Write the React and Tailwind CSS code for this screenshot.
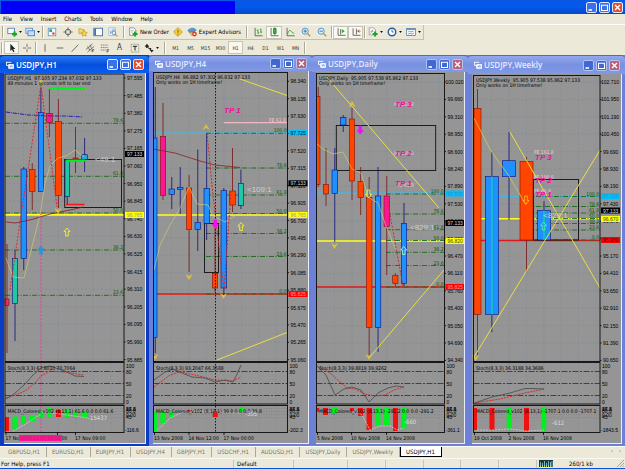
import React, { useState } from 'react';
import clsx from 'clsx';

const BLUE = '#1e90ff';
const ORANGE = '#ff4500';
const PINK = '#ff1493';
const TEAL = '#20c8a8';
const NAVY = '#10107a';
const MAROON = '#7a1414';
const LIME = '#00f020';
const RED = '#f01010';

// candle: [left, right, bodyTop, bodyBottom, wickTop, wickBottom, color]
const charts = [
  {
    title: 'USDJPY,H1',
    active: true,
    view: [4, 73, 141, 370],
    frame: [5, 124, 74],
    titleHeight: 'h-[18px]',
    header: ['USDJPY,H1  97.105 97.234 97.032 97.133', '49 minutes 1 seconds left to bar end'],
    prices: ['97.595', '97.485', '97.380', '97.275', '97.165', '97.060', '96.950', '96.845', '96.740', '96.630', '96.525', '96.415', '96.310', '96.205', '96.095', '95.990', '95.885'],
    priceStart: 78,
    priceStep: 17.6,
    gridX: [23.5, 41, 58.5, 76, 93, 111],
    tags: [[154, '97.133', '#000', '#ddd'], [215, '96.765', '#ff0', '#998']],
    levels: [[214.7, '#ffff20', 2]],
    fibs: [[123.3, '78.6'], [176.3, '61.8'], [213, '50.0'], [250, '38.2'], [295.3, '23.6']],
    fibStart: 5,
    candles: [
      [5, 9, 299, 305.5, 244, 353, '#e8305a'],
      [12.5, 17.5, 258.5, 303.5, 250, 341, TEAL],
      [21, 26.5, 169, 258.5, 167, 270, BLUE],
      [29.5, 35, 169.5, 191.5, 163, 210, ORANGE],
      [38.3, 43.5, 112.5, 191.5, 88, 191, BLUE],
      [46.5, 52.3, 113.5, 122.5, 89, 137, PINK],
      [55.5, 61.3, 121.5, 195.5, 99, 208, ORANGE],
      [65, 69.5, 160, 196.7, 160, 204, TEAL],
      [73, 78, 158, 159, 127, 173, ORANGE],
      [81.7, 87.5, 154.7, 159.3, 138, 172, '#20a8d8'],
    ],
    box: [64.7, 159.5, 56.8, 48],
    segments: [[49.5, 88.5, 85, 88.5, LIME, 2], [66, 160.5, 85, 160.5, LIME, 2], [66, 204.5, 84.5, 204.5, '#f01818', 1.5]],
    lines: [
      ['6,258 13,277 24,278 40,215 45,183 50,166 58,158 66,156 75,150 84,157', '#d8d070', 0.6],
      ['6,222 15,223 30,220 50,214 70,210 83,207', '#8a1c1c', 0.8],
      ['6,112 28,115 55,116 65,116 83,117', '#2020b0', 1, '4 1 1 1'],
      ['10,290 20,222 41,85 57,207', '#e02828', 1, '2 1.5'],
      ['41,213 41,432', '#f0409a', 1, '2 1.5'],
    ],
    heads: [[41, 82, 'up'], [58, 211, 'down']],
    arrows: [[67, 232, 'up', '#ffff20', 'none'], [41, 250, 'up', '#3090e0', '#3090e0']],
    notes: [[95, 162, '<49:1']],
    tps: [],
    stoch: 'Stoch(8,3,3) 67.8010 70.7064',
    main: '6,399 14,394 24,385 33,375 41,368 50,366 65,371 75,376 84,376.5',
    signal: '6,398 15,395 25,391 35,383 41,376 50,371 65,372 84,375',
    macd: 'MACD_Colored_v102 (8,13,1) 61.6 0.0 0.0 61.6',
    bars: [[5, 4, 417, 431, RED], [12.5, 5, 416.5, 430, LIME], [21, 5, 416, 424, LIME], [30, 5, 416, 421, LIME], [38.5, 5, 411, 417, LIME], [47, 5, 407.5, 417, LIME], [56, 5, 410, 417, RED], [64.5, 5, 410, 417, LIME], [73, 5, 411, 417, LIME], [82, 5.5, 412, 417, LIME]],
    macdCurve: '13,431 24,425 36,417 45,412 60,414 88,418',
    macdNote: [88, 420, '-15437'],
    low: '-116.6',
    dates: [[5.5, '17 Nov 2008'], [57, '5:00'], [75, '17 Nov 09:00']],
    marker: [19, 43, '2008.11.17 05:00'],
  },
  {
    title: 'USDJPY,H4',
    view: [153, 71, 155, 372],
    frame: [153.5, 287.5, 72.5],
    titleHeight: 'h-4',
    header: ['USDJPY,H4  96.882 97.302 96.832 97.133', 'Only works on 1H timeframe!'],
    prices: ['98.340', '98.135', '97.930', '97.725', '97.520', '97.315', '97.110', '96.905', '96.700', '96.495', '96.290', '96.085', '95.880', '95.675', '95.470', '95.265', '95.060'],
    priceStart: 81.3,
    priceStep: 17.4,
    gridX: [171.5, 189, 206.5, 224, 241.5, 259, 276],
    tags: [[133, '97.725', '#00bfff', '#012'], [183.3, '97.133', '#000', '#ddd'], [215, '96.765', '#ff0', '#998'], [294, '95.825', '#f00', '#f99']],
    levels: [[133.3, '#30c0f0', 1.5], [215, '#ffff20', 1.5], [294, '#e01818', 1.5]],
    fibs: [[133.3, '100.0'], [168, '78.6'], [195, '61.8'], [213.5, '50.0'], [233.5, '38.2'], [256.5, '23.6'], [294, '0.0']],
    fibStart: 206,
    candles: [
      [153.5, 157, 138, 337.5, 87, 353, BLUE],
      [160.3, 165.7, 136.5, 195.5, 103, 200, PINK],
      [169, 174.5, 189, 194.3, 177, 209, BLUE],
      [177.5, 183, 187.5, 189.5, 167, 214, BLUE],
      [186.5, 191.7, 188, 229.5, 175, 272, ORANGE],
      [195, 200.5, 222.5, 229.5, 149.5, 251, BLUE],
      [204, 209.3, 188.3, 223.5, 133, 240, BLUE],
      [212.3, 217.7, 273.3, 288, 223, 292, ORANGE],
      [221, 226.7, 190.7, 288, 188, 295, BLUE],
      [229.7, 235.3, 191, 205, 148, 212, ORANGE],
      [238.3, 243.5, 183.3, 205.7, 169.7, 209, TEAL],
    ],
    box: [204.5, 223.5, 14, 49],
    segments: [[223.7, 122.7, 287, 122.7, '#f0b8c4', 1.3], [240, 79, 287, 95.5, '#e8e040', 1], [217, 360, 287, 332.5, '#e8e040', 1]],
    lines: [
      ['153,149 175,153 200,161 215,165 240,167.5', '#8a2020', 0.8],
      ['154,270 160,245 170,225 180,208 189,187 197,204 208,205 213,216 225,222 238,214', '#d8d070', 0.6],
      ['207,133 213,195 224,290 231,192', '#d02828', 1, '2 1.5'],
      ['215.5,73 215.5,432', '#181818', 1, '1.5 1.5'],
    ],
    heads: [[206, 127, 'up'], [189, 277, 'down'], [223.5, 296, 'down'], [155, 357, 'down']],
    arrows: [[215.3, 224, 'down', '#f010f0', '#f010f0'], [241, 226.5, 'up', '#ffff20', 'none']],
    notes: [[247, 192, '<109:1']],
    tps: [[224, 113, 'TP 1']],
    fes: [[269, 121.5, 'FE 61.8']],
    stoch: 'Stoch(8,3,3) 93.2047 66.3588',
    main: '154,380 165,372 173,369 182,373 192,377 205,378 215,382 225,380 233,382 237,374 241,365',
    signal: '154,387 170,375 180,372 195,375 215,380 233,381 241,377',
    macd: 'MACD_Colored_v102 (8,13,1) 39.8 0.0 0.0 39.8',
    bars: [[154, 3, 411, 431, LIME], [160.3, 5.3, 411, 423, LIME], [169, 5, 411, 417, LIME], [187, 5, 410, 412, RED], [212.7, 5, 411, 417, RED], [239, 5, 407, 412, LIME]],
    macdCurve: '157,430 163,425 170,418 185,411 241,413',
    macdNote: [245, 416, '-305'],
    low: '-202.3',
    dates: [[154, '13 Nov 2008'], [188.5, '14 Nov 12:00'], [223.5, '17 Nov 00:00']],
  },
  {
    title: 'USDJPY,Daily',
    view: [316, 72, 148, 371],
    frame: [316.5, 444.5, 73.5],
    titleHeight: 'h-[17px]',
    header: ['USDJPY,Daily  95.905 97.538 95.862 97.133', 'Only works on 1H timeframe!'],
    prices: ['100.020', '99.660', '99.310', '98.950', '98.600', '98.240', '97.890', '97.530', '97.180', '96.820', '96.470', '96.110', '95.760', '95.400', '95.050', '94.690', '94.340'],
    priceStart: 82,
    priceStep: 17.4,
    gridX: [334.5, 352, 369.5, 387, 404, 421.5, 439],
    tags: [[193.5, '97.725', '#00bfff', '#3090c0'], [223, '97.133', '#000', '#ddd'], [241, '96.820', '#ff0', '#443'], [287, '95.825', '#f00', '#f99']],
    levels: [[193.3, '#30c0f0', 1.5], [241, '#ffff20', 1.5], [287, '#e01818', 1.5]],
    fibs: [[194, '100.0'], [214, '78.6'], [229.7, '61.8'], [240.5, '50.0'], [252.3, '38.2'], [265.5, '23.6'], [287, '0.0']],
    fibStart: 386,
    candles: [
      [316.5, 320, 96.5, 184.5, 87, 187, ORANGE],
      [323.3, 328.7, 184.5, 194, 148, 206, ORANGE],
      [332, 337.5, 170, 193.5, 148, 242, BLUE],
      [340.5, 346, 117.5, 125, 115, 132, BLUE],
      [349.3, 354.7, 119, 181, 108, 200, ORANGE],
      [358, 363.3, 181.3, 197.5, 167, 215, ORANGE],
      [366.3, 372, 197.5, 327.5, 177, 355, ORANGE],
      [375.3, 380.8, 196, 327.5, 167, 352, BLUE],
      [384, 389.5, 196, 226.5, 176, 275, PINK],
      [392.7, 398, 275.3, 283.5, 273, 286, ORANGE],
      [401.3, 406.7, 223.3, 283.5, 203, 286, BLUE],
    ],
    box: [336.3, 125.5, 99.4, 45],
    segments: [[326, 76, 439, 208, '#e8e040', 1], [369, 358, 444, 270, '#e8e040', 1]],
    lines: [
      ['316,143 323,149 333,154 343,152 352,169 361,173 368,197 378,203 386,226 396,250', '#d8d070', 0.6],
      ['387,198 403,286', '#d02828', 1, '2 1.5'],
    ],
    heads: [[352, 104, 'up'], [334.5, 246, 'down'], [369, 357, 'down']],
    arrows: [[360.3, 130, 'down', '#f010f0', '#f010f0'], [368.5, 194, 'down', '#ffff20', 'none'], [403.7, 250.5, 'up', '#b0ffe0', 'none']],
    notes: [[410, 230, '<829:1']],
    tps: [[395, 106.5, 'TP 3'], [395, 155.5, 'TP 2'], [395, 186, 'TP 1']],
    fes: [[394, 106, 'FE 161.8'], [394, 155, 'FE 100.0'], [397, 187, 'FE 61.8']],
    stoch: 'Stoch(8,3,3) 39.8819 39.9262',
    main: '317,366 326,375 335,395 344,389 352,387 361,390 369,402 378,393 388,388 396,386 404,387',
    signal: '320,367 330,373 340,382 347,388 355,389 365,394 375,396 385,395 394,390 404,387',
    macd: 'MACD_Colored_v102 (8,13,1) -291.2 0.0 0.0 -291.2',
    bars: [[317, 2, 408, 412, RED], [323, 5, 408, 415, RED], [332, 5.5, 408, 414, LIME], [350, 4, 408, 411, RED], [358, 5, 408, 416, RED], [366.5, 5.5, 408, 430, RED], [375.5, 5, 408, 425, LIME], [384, 5, 408, 425, LIME], [393, 5, 408, 431, RED], [401.5, 5, 408, 428.5, LIME]],
    macdCurve: '355,411 362,415 370,430 380,426 390,426 397,430 404,428',
    macdNote: [404, 424, '-660'],
    low: '-361.1',
    dates: [[317, '5 Nov 2008'], [351, '10 Nov 2008'], [386, '14 Nov 2008']],
  },
  {
    title: 'USDJPY,Weekly',
    view: [472, 74, 149, 369],
    frame: [473.5, 600, 75.5],
    titleHeight: 'h-[19px]',
    header: ['USDJPY,Weekly  95.905 97.538 95.862 97.133', 'Only works on 1H timeframe!'],
    prices: ['102.710', '101.950', '101.190', '100.450', '99.690', '98.930', '98.190', '97.430', '96.670', '95.930', '95.170', '94.410', '93.650', '92.910', '92.150', '91.390', '90.650'],
    priceStart: 82,
    priceStep: 17.4,
    gridX: [491.5, 509, 526.5, 544, 561, 578.5, 596],
    tags: [[196, '97.725', '#00bfff', '#3090c0'], [210.5, '97.133', '#000', '#ddd'], [219, '96.670', '#ff0', '#443'], [240, '95.930', '#f00', '#600']],
    levels: [[196.3, '#30c0f0', 1], [218.7, '#ffff20', 1.5], [240.5, '#e01818', 1.5]],
    fibs: [[196.5, '100.0'], [206.5, '78.6'], [213, '61.8'], [218.5, '50.0'], [223.5, '38.2'], [230, '23.6'], [240, '0.0']],
    fibStart: 527,
    candles: [
      [474, 481, 108.5, 314.5, 89, 355, ORANGE],
      [485.3, 498.5, 176.5, 314.5, 152, 332, BLUE, true],
      [502.5, 515.5, 160.7, 176.7, 132, 220, BLUE],
      [520, 533, 161.5, 240, 157, 272, ORANGE],
      [537.5, 550.5, 210.5, 240, 201, 240, BLUE, true],
    ],
    box: [533.5, 179.5, 45, 60.5],
    segments: [[510, 132, 600, 288, '#e8e040', 1], [600, 150, 474, 357, '#e8e040', 1]],
    lines: [['474,118 491,151 509,176 526,205', '#d8c850', 0.8]],
    heads: [[475.5, 358, 'down']],
    arrows: [[526, 200, 'down', '#ffc020', 'none'], [543.5, 226, 'up', '#60ff60', 'none']],
    notes: [[543, 218, '<829:1']],
    tps: [[535, 160, 'TP 3'], [535, 183, 'TP 2'], [535, 196.5, 'TP 1']],
    fes: [[534, 154, 'FE 161.8'], [534, 178.5, 'FE 100.0'], [534, 192.5, 'FE 61.8']],
    stoch: 'Stoch(8,3,3) 36.3188 34.3686',
    main: '474.5,403 492,397 510,393 525,388.5 532,388.5 544,389',
    signal: '474.5,403 500,399 525,393 544,389',
    macd: 'MACD_Colored_v102 (8,13,1) -1707.1 0.0 0.0 -1707.1',
    bars: [[474, 3, 408, 430, RED], [489.5, 5, 408, 430, RED], [506.7, 5, 408, 430, LIME], [524, 5, 408, 431, RED], [541.3, 5, 408, 430.5, LIME]],
    macdCurve: '477,430 492,430 510,429 527,431 544,430',
    macdNote: [552, 425, '-612'],
    low: '-1843.5',
    dates: [[474, '19 Oct 2008'], [508.5, '2 Nov 2008'], [543, '16 Nov 2008']],
  },
];

const Arrow = ({ x, y, dir, stroke, fill }) => (
  <path
    transform={`translate(${x} ${y})${dir === 'down' ? ' rotate(180)' : ''}`}
    d="M0 -4 L3 -0.5 H1.3 V4 H-1.3 V-0.5 H-3 Z"
    stroke={stroke}
    fill={fill}
    strokeWidth="0.8"
  />
);

const Head = ({ x, y, dir }) => (
  <path
    transform={`translate(${x} ${y})${dir === 'down' ? ' rotate(180)' : ''}`}
    d="M-3 2.5 L0 -2.5 L3 2.5 L0 0.5 Z"
    fill="#e8c020"
    stroke="#f0d840"
    strokeWidth="0.3"
  />
);

const Chart = ({ c }) => {
  const [left, right, top] = c.frame;
  return (
    <svg viewBox={c.view.join(' ')} className="block h-auto w-full text-[5px]" role="img" aria-label={`${c.title} chart`}>
      <rect x={c.view[0]} y={c.view[1]} width={c.view[2]} height={c.view[3]} fill="#959595" />

      {/* grid */}
      <g stroke="#7f8a98" strokeWidth="0.6" strokeDasharray="2 2">
        {c.gridX.map((x) => (
          <path key={x} d={`M${x} ${top}V361M${x} 363V404M${x} 406V432`} />
        ))}
        {c.prices.map((p, i) => (
          <path key={p} d={`M${left} ${c.priceStart + i * c.priceStep}H${right}`} />
        ))}
      </g>

      {c.levels.map(([y, color, w]) => (
        <path key={y} d={`M${left} ${y}H${right}`} stroke={color} strokeWidth={w} />
      ))}
      {c.fibs.map(([y, label]) => (
        <g key={label}>
          <path d={`M${c.fibStart} ${y}H${right}`} stroke="#1a6a1a" strokeWidth="0.9" strokeDasharray="5 1.5 1 1.5" />
          <text x={right - 1} y={y - 1} textAnchor="end" fill="#005c00">{label}</text>
        </g>
      ))}
      <rect x={c.box[0]} y={c.box[1]} width={c.box[2]} height={c.box[3]} fill="none" stroke="#111" strokeWidth="0.9" />

      {/* candles */}
      {c.candles.map(([x1, x2, y1, y2, w1, w2, color, core]) => {
        const dark = color === BLUE || color === TEAL || color === '#20a8d8' ? NAVY : MAROON;
        return (
          <g key={x1}>
            <path d={`M${(x1 + x2) / 2} ${w1}V${w2}`} stroke={dark} strokeWidth="0.8" />
            <rect x={x1} y={y1} width={x2 - x1} height={y2 - y1} fill={color} stroke={dark} strokeWidth="0.6" />
            {core && <path d={`M${(x1 + x2) / 2} ${y1}V${y2}`} stroke="#10d8a0" strokeWidth="1.2" />}
          </g>
        );
      })}
      {c.segments.map(([x1, y1, x2, y2, color, w]) => (
        <path key={`${x1}-${y1}`} d={`M${x1} ${y1}L${x2} ${y2}`} stroke={color} strokeWidth={w} />
      ))}
      {c.lines.map(([points, color, w, dash]) => (
        <polyline key={points} points={points} fill="none" stroke={color} strokeWidth={w} strokeDasharray={dash} />
      ))}
      {c.heads.map(([x, y, dir]) => <Head key={`${x}-${y}`} x={x} y={y} dir={dir} />)}
      {c.arrows.map(([x, y, dir, stroke, fill]) => (
        <Arrow key={`${x}-${y}`} x={x} y={y} dir={dir} stroke={stroke} fill={fill} />
      ))}

      {(c.fes || []).map(([x, y, label]) => <text key={label} x={x} y={y} fill="#f8c8d4">{label}</text>)}
      {c.tps.map(([x, y, label]) => (
        <text key={label} x={x} y={y} fill="#f0109a" className="font-['Liberation_Sans',sans-serif] text-[8px] font-bold italic">{label}</text>
      ))}
      {c.notes.map(([x, y, label]) => (
        <text key={label} x={x} y={y} fill="#cfcfcf" className="font-['Liberation_Sans',sans-serif] text-[8px]">{label}</text>
      ))}
      <text x={left + 2.5} y={top + 6} className="whitespace-pre">{c.header[0]}</text>
      <text x={left + 2.5} y={top + 11}>{c.header[1]}</text>

      {/* stochastic */}
      <g stroke="#2828b8" strokeWidth="0.9" strokeDasharray="6 1.5 2 1.5">
        <path d={`M${left} 371.5H${right}M${left} 383.5H${right}M${left} 395.5H${right}`} />
      </g>
      <polyline points={c.signal} fill="none" stroke="#d82020" strokeWidth="0.9" strokeDasharray="2 1" />
      <polyline points={c.main} fill="none" stroke="#505050" strokeWidth="0.9" />
      <text x={left + 2.5} y="369.5">{c.stoch}</text>

      {/* macd */}
      <path d={`M${left} 408.5H${right}M${left} 411.5H${right}M${left} 414.5H${right}M${left} 417.5H${right}`} stroke="#7c7c7c" strokeWidth="0.6" strokeDasharray="1 1.5" />
      {c.bars.map(([x, w, y1, y2, color]) => <rect key={x} x={x} y={y1} width={w} height={y2 - y1} fill={color} />)}
      <polyline points={c.macdCurve} fill="none" stroke="#d8d8d8" strokeWidth="0.7" strokeDasharray="2 1" />
      <text x={left + 2.5} y="413">{c.macd}</text>
      <text x={c.macdNote[0]} y={c.macdNote[1]} fill="#dcdcdc" className="text-[6px]">{c.macdNote[2]}</text>

      {/* panel borders */}
      <g stroke="#181818" fill="none">
        <rect x={left} y={top} width={right - left} height={361.5 - top} />
        <rect x={left} y="362.5" width={right - left} height="41.5" />
        <rect x={left} y="405.5" width={right - left} height="27" />
      </g>

      {/* scales */}
      <g className="font-['Liberation_Sans',sans-serif]">
        {c.prices.map((p, i) => (
          <React.Fragment key={p}>
            <path d={`M${right} ${c.priceStart + i * c.priceStep}h1.5`} stroke="#000" strokeWidth="0.8" />
            <text x={right + (p.length > 6 ? 1 : 3)} y={c.priceStart + i * c.priceStep + 2}>{p}</text>
          </React.Fragment>
        ))}
        {[['100', 368], ['80', 373.5], ['50', 385.5], ['20', 397.5], ['0', 403.5]].map(([t, y]) => (
          <text key={t} x={right + 2} y={y}>{t}</text>
        ))}
        {[['86.3', 411], ['00.0', 412.5], ['17.6', 410.5], ['0.00', 417], ['45', 419]].map(([t, y]) => (
          <text key={t} x={right + 2} y={y}>{t}</text>
        ))}
        <text x={right + 1} y="431.5">{c.low}</text>
      </g>
      {c.dates.map(([x, d]) => (
        <React.Fragment key={d}>
          <path d={`M${x + 0.5} 432v3`} stroke="#000" strokeWidth="0.8" />
          <text x={x} y="439.5">{d}</text>
        </React.Fragment>
      ))}
      {c.tags.map(([y, label, bg, color]) => (
        <g key={label}>
          <rect x={right + 1} y={y - 3} width="19" height="6" fill={bg} />
          <text x={right + 3} y={y + 2} fill={color} className="font-['Liberation_Sans',sans-serif]">{label}</text>
        </g>
      ))}
      {c.marker && (
        <g>
          <rect x={c.marker[0]} y="435" width={c.marker[1]} height="6" fill="#ff1493" />
          <text x={c.marker[0] + 1} y="439.5" fill="#a83070">{c.marker[2]}</text>
        </g>
      )}
    </svg>
  );
};

const WindowButtons = ({ dim, name }) => (
  <div className="flex gap-[2px]">
    {['Minimize', 'Maximize', 'Close'].map((kind) => (
      <button
        key={kind}
        aria-label={`${kind} ${name}`}
        className={clsx(
          'size-[11px] rounded-[2px] border',
          dim ? 'border-[#b4c4f0]' : 'border-[#dfe8ff]',
          kind === 'Close' ? (dim ? 'bg-[#b8607c]' : 'bg-[#e0502c]') : dim ? 'bg-[#3f68d4]' : 'bg-[#3a70ea]'
        )}
      >
        <svg viewBox="0 0 9 9" className="block size-full" fill="none" stroke="#fff">
          {kind === 'Minimize' && <path d="M1.5 7H5" strokeWidth="1.6" />}
          {kind === 'Maximize' && <path d="M1.5 2.2H7.5M1.5 1.8V7.5H7.5V1.8" strokeWidth="1.1" />}
          {kind === 'Close' && <path d="M2 2L7 7M7 2L2 7" strokeWidth="1.4" />}
        </svg>
      </button>
    ))}
  </div>
);

const ChartWindow = ({ c }) => (
  <section className={clsx('flex flex-col pr-[3px] pb-[2px] pl-1', c.active ? 'bg-[#0c3cc4]' : 'bg-[#6c80d6]')}>
    <header
      className={clsx(
        '-mr-[3px] -ml-1 flex items-center gap-[2px] rounded-t-[4px] border-t pl-[6px] pr-[5px]',
        c.titleHeight,
        c.active ? 'border-[#0838b0] bg-linear-to-b from-[#2a78f4] via-[#0650dc] to-[#0a5cf0]' : 'border-[#5468b8] bg-linear-to-b from-[#92a8ee] via-[#7890e0] to-[#809ae6]'
      )}
    >
      <svg viewBox="0 0 9 9" className="size-[8px] shrink-0" fill="none" stroke="#fff">
        <path d="M0.5 1.5H6M0.5 1V5H3" />
        <path d="M3 4H8.5V8.3H3Z" fill="#d8e4ff" />
        <path d="M4.5 6.5L6 5.5L7.5 6.5" stroke="#4060b0" strokeWidth="0.7" />
      </svg>
      <h2 className={clsx("grow truncate font-['Open_Sans',sans-serif] text-[8px] leading-[10px] font-semibold", c.active ? 'text-white' : 'text-[#e4ebff]')}>{c.title}</h2>
      <WindowButtons dim={!c.active} name={c.title} />
    </header>
    <div className="border-r border-b border-[#e8ecf8]">
      <Chart c={c} />
    </div>
  </section>
);

/* toolbar drawings, all on a 12x12 grid */
const icons = {
  newChart: <><rect x="1" y="1.5" width="8" height="6.5" fill="#fff" stroke="#4a7ab0" /><path d="M6 8.5H12M9 5.5V11.5" stroke="#18a828" strokeWidth="2.6" /></>,
  profiles: <><rect x="1" y="1.5" width="8" height="6" fill="#e4eefc" stroke="#5a8ac4" /><rect x="3.5" y="4.5" width="8" height="6" fill="#c8dcf8" stroke="#4a7ab8" /></>,
  marketWatch: <><rect x="1.5" y="1.5" width="9" height="9" fill="#fff" stroke="#5a98d0" /><path d="M3.5 6V3.5H6M3.5 3.5L6 6" stroke="#28a038" strokeWidth="1.4" /><circle cx="7.7" cy="7.7" r="1.5" fill="#e04828" stroke="none" /></>,
  crosshair: <><circle cx="6" cy="6" r="3.3" stroke="#555" /><path d="M6 0.5V4.5M6 7.5V11.5M0.5 6H4.5M7.5 6H11.5" stroke="#555" /></>,
  navigator: <><path d="M1 3V8H7V3H4L3.5 2H1Z" fill="#f0d870" stroke="#b89830" strokeWidth="0.8" /><path d="M7.5 4L8.7 6.3L11.2 6.6L9.4 8.4L9.9 11L7.5 9.8L5.2 11L5.7 8.4L4 6.6L6.4 6.3Z" fill="#f8d840" stroke="#b89028" strokeWidth="0.7" /></>,
  terminal: <><rect x="1" y="1.5" width="10.5" height="9" fill="#fff" stroke="#3068a8" /><path d="M2.5 2V10" stroke="#3068a8" strokeWidth="2" /></>,
  tester: <><rect x="1" y="1" width="8" height="9" fill="#eef4fc" stroke="#90b0d0" strokeWidth="0.8" /><path d="M3 8V5M5 7V3M7 5V2" stroke="#6090c8" /><circle cx="7" cy="7" r="2.2" stroke="#5888b8" /><path d="M8.6 8.6L11.3 11.3" stroke="#c89830" strokeWidth="1.4" /></>,
  order: <><path d="M2 1H7L9.5 3.5V10H2Z" fill="#fff" stroke="#777" strokeWidth="0.9" /><path d="M3.5 4H7M3.5 6H6" stroke="#999" strokeWidth="0.8" /><path d="M5.5 8.5H11.5M8.5 5.5V11.5" stroke="#18a828" strokeWidth="2.4" /></>,
  editor: <><path d="M6 0.8L11.2 6L6 11.2L0.8 6Z" fill="#f8d030" stroke="#b88818" strokeWidth="0.9" /><path d="M6 3.5V7M6 8V9" stroke="#705010" strokeWidth="1.1" /></>,
  expert: <><path d="M2.5 6L6 10.5L9.5 6Z" fill="#f0d060" stroke="#a08030" strokeWidth="0.7" /><path d="M1 4.5C3 1 8 0.5 11 3.5L9 6H3Z" fill="#5898d0" stroke="#2f6ca8" strokeWidth="0.7" /><circle cx="9" cy="8.5" r="2.8" fill="#e03020" stroke="none" /><path d="M8 7.5H10V9.5H8Z" fill="#fff" stroke="none" /></>,
  barChart: <><path d="M2.5 1V10.5H11.5" stroke="#555" /><path d="M6 3V8.5M6 4H4.5M6 7H7.5M9.5 2V7.5M9.5 3H8.5M9.5 6H11" stroke="#28a028" /></>,
  candleChart: <><path d="M2.5 1V10.5H11.5" stroke="#555" /><path d="M7 0.5V9.5" stroke="#107010" /><rect x="5.5" y="2" width="3" height="5.5" fill="#28c028" stroke="#107010" strokeWidth="0.8" /></>,
  lineChart: <><path d="M2.5 1V10.5H11.5" stroke="#555" /><path d="M3 8.5C5 2 7 4 8 6L11 8" stroke="#28a028" /></>,
  zoomIn: <><circle cx="5" cy="5" r="3.7" fill="#d4ecfc" stroke="#4888c0" /><path d="M3 5H7M5 3V7" stroke="#2868a8" /><path d="M7.8 7.8L11 11" stroke="#c89830" strokeWidth="1.8" /></>,
  zoomOut: <><circle cx="5" cy="5" r="3.7" fill="#d4ecfc" stroke="#4888c0" /><path d="M3 5H7" stroke="#2868a8" /><path d="M7.8 7.8L11 11" stroke="#c89830" strokeWidth="1.8" /></>,
  scroll: <><path d="M2.5 1.5V10H11.5M5.5 2.5V9" stroke="#555" /><path d="M7 2.5L10.5 5L7 7.5Z" fill="#28b028" stroke="none" /></>,
  shift: <><path d="M2.5 1.5V10H11.5M6.5 2V9" stroke="#555" /><path d="M8 5H11.5M8 5L10 3.5M8 5L10 6.5" stroke="#904030" strokeWidth="0.9" /></>,
  indicators: <><path d="M1.5 1H6.5L9 3V9.5H1.5Z" fill="#fff" stroke="#888" strokeWidth="0.8" /><path d="M3 8L6 3M3 5H6.5" stroke="#777" strokeWidth="0.8" /><path d="M5.5 8.5H11.5M8.5 5.5V11.5" stroke="#18a828" strokeWidth="2.4" /></>,
  clock: <><circle cx="6" cy="6" r="4.5" fill="#fff" stroke="#2060a8" strokeWidth="1.8" /><path d="M6 3.2V6H8" stroke="#333" strokeWidth="0.9" /></>,
  template: <><rect x="0.8" y="1.8" width="10.4" height="8.4" fill="#fff" stroke="#5080b0" /><path d="M1 3H11" stroke="#5080b0" /><path d="M2.5 6L4.5 4.8L6 6L9 5M2.5 8.5L5 7.5L7 8.5L9.5 7.3" stroke="#666" strokeWidth="0.8" /></>,
  cursor: <path d="M4 1V9.5L6 7.7L7.5 11L9 10.3L7.5 7.2H10Z" fill="#222" stroke="none" />,
  cross: <path d="M6 1V5M6 7V11M1 6H5M7 6H11" stroke="#666" />,
  vline: <path d="M6 1.5V10.5" stroke="#555" />,
  hline: <path d="M2 6H10" stroke="#555" />,
  trend: <path d="M2 10.5L10 2" stroke="#555" />,
  channel: <><path d="M1 8L9 1M3 11L11 4M3 4L6 9M6 2L8 7" stroke="#555" strokeWidth="0.9" /><path d="M8.5 11V8H11M8.5 9.5H10.5" stroke="#444" strokeWidth="0.9" /></>,
  fibo: <><path d="M1 2.5H10M1 5.5H10M1 8.5H7" stroke="#666" strokeDasharray="1.5 0.7" /><path d="M8.5 11.5V8H11M8.5 9.7H10.5" stroke="#444" strokeWidth="0.9" /></>,
  label: <><rect x="1.5" y="1.5" width="9" height="9.5" stroke="#666" strokeWidth="0.8" strokeDasharray="1 0.7" /><path d="M3.5 4H8.5M6 4V9" stroke="#222" strokeWidth="1.2" /></>,
  marks: <><path d="M3.5 1L6.5 4.5H4.5V6H2.5V4.5H0.8Z" fill="#222" stroke="none" /><path d="M5 5.5L8 8M8 6V9H10M8.5 11L11 8.5" stroke="#222" strokeWidth="1.3" /></>,
};

const Tool = ({ icon, label, width = 'w-[15px]', menu, pressed, children }) => (
  <button
    aria-label={label}
    className={clsx(
      'flex h-[13px] shrink-0 items-center justify-center text-[6px]',
      width,
      pressed && 'border border-[#c8c4b4] bg-[#f8f7f1]'
    )}
  >
    {icon && (
      <svg viewBox="0 0 12 12" className="size-[10px] shrink-0" fill="none">{icons[icon]}</svg>
    )}
    {children}
    {menu && (
      <svg viewBox="0 0 4 3" className="ml-[2px] h-[2px] w-[3px] shrink-0"><path d="M0 0H4L2 3Z" fill="#000" /></svg>
    )}
  </button>
);

const Sep = ({ width = 'w-[3px]' }) => (
  <span className={clsx('flex h-[12px] shrink-0 justify-center', width)}>
    <span className="w-px bg-[#aca899]" />
    <span className="w-px bg-white" />
  </span>
);

const menus = ['File', 'View', 'Insert', 'Charts', 'Tools', 'Window', 'Help'];
const timeframes = ['M1', 'M5', 'M15', 'M30', 'H1', 'H4', 'D1', 'W1', 'MN'];
const tabs = ['GBPUSD,H1', 'EURUSD,H1', 'EURJPY,H1', 'USDJPY,H4', 'GBPJPY,H1', 'USDCHF,H1', 'AUDUSD,H1', 'USDJPY,Daily', 'USDJPY,Weekly', 'USDJPY,H1'];

export default function App() {
  const [timeframe, setTimeframe] = useState('H1');
  const [tab, setTab] = useState(tabs.length - 1);

  return (
    <div className="w-full overflow-hidden bg-[#ece9d8] font-['DejaVu_Sans_Condensed','DejaVu_Sans',sans-serif] text-[6px] leading-[8px] text-black">
      <div className="flex h-[14px] items-center justify-between bg-linear-to-b from-[#0a58e4] via-[#0458ec] to-[#0348c8] pr-[2px]">
        <div className="mt-px ml-px h-[13px] w-3/8 bg-[#0000fa]" />
        <WindowButtons name="terminal" />
      </div>

      <nav className="flex h-[11px] items-center gap-[8px] border-b border-white pl-[3px]">
        {menus.map((m) => <button key={m}>{m}</button>)}
      </nav>

      <div className="flex h-[15px]">
        <div className="flex items-center border-r border-b border-[#c4c0b0]">
          <Sep width="w-[5px]" />
          <Tool icon="newChart" label="New chart" width="w-[18px]" menu />
          <Tool icon="profiles" label="Profiles" width="w-[18px]" menu />
          <Sep />
          <Tool icon="marketWatch" label="Market watch" width="w-4" />
          <Tool icon="crosshair" label="Data window" />
          <Tool icon="navigator" label="Navigator" />
          <Tool icon="terminal" label="Terminal" />
          <Tool icon="tester" label="Strategy tester" />
          <Sep width="w-[7px]" />
          <Tool icon="order" label="New Order" width="w-[43px]"><span className="ml-[2px] whitespace-nowrap">New Order</span></Tool>
          <Tool icon="editor" label="MetaEditor" />
          <Tool icon="expert" label="Expert Advisors" width="w-[58px]"><span className="ml-[2px] whitespace-nowrap">Expert Advisors</span></Tool>
          <Sep width="w-[7px]" />
          <Tool icon="barChart" label="Bar chart" width="w-4" />
          <Tool icon="candleChart" label="Candlesticks" width="w-4" pressed />
          <Tool icon="lineChart" label="Line chart" width="w-4" />
          <Tool icon="zoomIn" label="Zoom in" width="w-4" />
          <Tool icon="zoomOut" label="Zoom out" width="w-4" />
          <Sep />
          <Tool icon="scroll" label="Auto scroll" pressed />
          <Tool icon="shift" label="Chart shift" pressed />
          <Sep />
          <Tool icon="indicators" label="Indicators" width="w-[19px]" menu />
          <Tool icon="clock" label="Periods" width="w-[19px]" menu />
          <Tool icon="template" label="Templates" width="w-[19px]" menu />
        </div>
      </div>

      <div className="flex h-[15px] items-center">
        <Sep width="w-[4px]" />
        <Tool icon="cursor" label="Cursor" pressed />
        <Tool icon="cross" label="Crosshair" />
        <Sep />
        <Tool icon="vline" label="Vertical line" />
        <Tool icon="hline" label="Horizontal line" />
        <Tool icon="trend" label="Trendline" />
        <Tool icon="channel" label="Channel" />
        <Tool icon="fibo" label="Fibonacci" />
        <Tool label="Text"><span className="text-[8px] text-[#333]">A</span></Tool>
        <Tool icon="label" label="Text label" />
        <Tool icon="marks" label="Arrows" width="w-[19px]" menu />
        <Sep width="w-[7px]" />
        {timeframes.map((t) => (
          <button
            key={t}
            onClick={() => setTimeframe(t)}
            className={clsx(
              'h-[13px] w-[15px] shrink-0 text-center text-[5px] text-[#333]',
              t === timeframe && 'border border-[#c8c4b4] bg-[#f8f7f1]'
            )}
          >
            {t}
          </button>
        ))}
        <Sep />
      </div>

      <main className="grid grid-cols-[149fr_163fr_156fr_157fr] bg-[#808080]">
        {charts.map((c) => <ChartWindow key={c.title} c={c} />)}
      </main>

      <div className="flex h-[12px] items-start border-t border-white bg-[#ece9d8] pl-[3px]">
        {tabs.map((t, i) => (
          <button
            key={t}
            onClick={() => setTab(i)}
            className={clsx(
              'h-[10px] shrink-0 border-r pr-[6px] pl-[5px]',
              i === tab ? 'border-b border-l border-black bg-white text-black' : 'border-[#aca899] text-[#77776c]'
            )}
          >
            {t}
          </button>
        ))}
        <span className="ml-auto flex gap-[6px] pr-1 text-[#6a6658]">
          <button aria-label="Scroll tabs left">‹</button>
          <button aria-label="Scroll tabs right">›</button>
        </span>
      </div>

      <footer className="flex h-[11px] items-center border-t border-[#f8f7f1] border-b border-b-[#0a50d8]">
        <span className="w-[233px] shrink-0 pl-px">For Help, press F1</span>
        <span className="w-[60px] shrink-0 border-l border-[#c8c4b4] pl-[3px]">Default</span>
        <span className="h-2 w-[55px] shrink-0 border-x border-[#c8c4b4]" />
        <span className="h-2 grow border-r border-[#c8c4b4]" />
        <span className="h-2 grow border-r border-[#c8c4b4]" />
        <span className="h-2 grow border-r border-[#c8c4b4]" />
        <span className="h-2 grow border-r border-[#c8c4b4]" />
        <span className="h-2 grow border-r border-[#c8c4b4]" />
        <svg viewBox="0 0 14 7" className="ml-[2px] h-[7px] w-[14px] shrink-0">
          <rect width="14" height="7" fill="#203828" />
          <path d="M1.5 7V2M3.5 7V3M5.5 7V1M7.5 7V3M9.5 7V1M11.5 7V2M13 7V1" stroke="#70b0d0" strokeWidth="1" />
          <path d="M1.5 7V5M3.5 7V5M5.5 7V5M7.5 7V5M9.5 7V5M11.5 7V5" stroke="#c8d050" strokeWidth="1" />
        </svg>
        <span className="w-[56px] shrink-0 text-center">260/1 kb</span>
        <svg viewBox="0 0 7 7" className="mr-px ml-2 size-[7px] shrink-0" stroke="#a8a490"><path d="M0 7L7 0M3 7L7 3M5.5 7L7 5.5" /></svg>
      </footer>
    </div>
  );
}
